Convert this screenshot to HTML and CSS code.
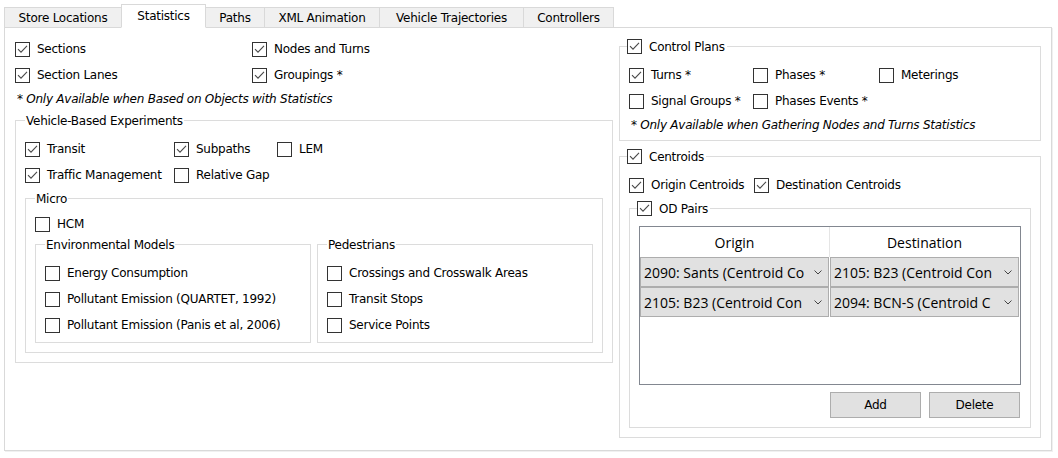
FILE: index.html
```html
<!DOCTYPE html>
<html>
<head>
<meta charset="utf-8">
<link rel="stylesheet" href="styles.css">
</head>
<body>
<div class="window">
  <div class="tabs">
    <div class="tab w-store">Store Locations</div>
    <div class="tab tab-active w-stat">Statistics</div>
    <div class="tab w-paths">Paths</div>
    <div class="tab w-xml">XML Animation</div>
    <div class="tab w-veh">Vehicle Trajectories</div>
    <div class="tab w-ctrl">Controllers</div>
  </div>
  <div class="panel">
    <div class="col col-left">
      <div class="grid grid-top">
        <label class="cb"><span class="box"><svg class="chk" viewBox="0 0 13 13"><path d="M2 6.2 L5 9.2 L11 2.8"/></svg></span>Sections</label>
        <label class="cb"><span class="box"><svg class="chk" viewBox="0 0 13 13"><path d="M2 6.2 L5 9.2 L11 2.8"/></svg></span>Nodes and Turns</label>
        <label class="cb"><span class="box"><svg class="chk" viewBox="0 0 13 13"><path d="M2 6.2 L5 9.2 L11 2.8"/></svg></span>Section Lanes</label>
        <label class="cb"><span class="box"><svg class="chk" viewBox="0 0 13 13"><path d="M2 6.2 L5 9.2 L11 2.8"/></svg></span>Groupings *</label>
      </div>
      <div class="note">* Only Available when Based on Objects with Statistics</div>
      <fieldset class="group g-vehicle">
        <legend class="lg-text">Vehicle-Based Experiments</legend>
        <div class="grid grid-veh">
          <label class="cb"><span class="box"><svg class="chk" viewBox="0 0 13 13"><path d="M2 6.2 L5 9.2 L11 2.8"/></svg></span>Transit</label>
          <label class="cb"><span class="box"><svg class="chk" viewBox="0 0 13 13"><path d="M2 6.2 L5 9.2 L11 2.8"/></svg></span>Subpaths</label>
          <label class="cb"><span class="box"></span>LEM</label>
          <label class="cb"><span class="box"><svg class="chk" viewBox="0 0 13 13"><path d="M2 6.2 L5 9.2 L11 2.8"/></svg></span>Traffic Management</label>
          <label class="cb"><span class="box"></span>Relative Gap</label>
        </div>
        <fieldset class="group g-micro">
          <legend class="lg-text">Micro</legend>
          <div class="hcm-row">
            <label class="cb"><span class="box"></span>HCM</label>
          </div>
          <div class="sub-groups">
            <fieldset class="group g-sub">
              <legend class="lg-text">Environmental Models</legend>
              <div class="grid grid-list">
                <label class="cb"><span class="box"></span>Energy Consumption</label>
                <label class="cb"><span class="box"></span>Pollutant Emission (QUARTET, 1992)</label>
                <label class="cb"><span class="box"></span>Pollutant Emission (Panis et al, 2006)</label>
              </div>
            </fieldset>
            <fieldset class="group g-sub">
              <legend class="lg-text">Pedestrians</legend>
              <div class="grid grid-list">
                <label class="cb"><span class="box"></span>Crossings and Crosswalk Areas</label>
                <label class="cb"><span class="box"></span>Transit Stops</label>
                <label class="cb"><span class="box"></span>Service Points</label>
              </div>
            </fieldset>
          </div>
        </fieldset>
      </fieldset>
    </div>

    <div class="col col-right">
      <fieldset class="group g-right g-control">
        <legend class="lg-check"><label class="cb"><span class="box"><svg class="chk" viewBox="0 0 13 13"><path d="M2 6.2 L5 9.2 L11 2.8"/></svg></span>Control Plans</label></legend>
        <div class="grid grid-ctrl">
          <label class="cb"><span class="box"><svg class="chk" viewBox="0 0 13 13"><path d="M2 6.2 L5 9.2 L11 2.8"/></svg></span>Turns *</label>
          <label class="cb"><span class="box"></span>Phases *</label>
          <label class="cb"><span class="box"></span>Meterings</label>
          <label class="cb"><span class="box"></span>Signal Groups *</label>
          <label class="cb"><span class="box"></span>Phases Events *</label>
        </div>
        <div class="note note-right">* Only Available when Gathering Nodes and Turns Statistics</div>
      </fieldset>

      <fieldset class="group g-right g-centroids">
        <legend class="lg-check"><label class="cb"><span class="box"><svg class="chk" viewBox="0 0 13 13"><path d="M2 6.2 L5 9.2 L11 2.8"/></svg></span>Centroids</label></legend>
        <div class="grid grid-cent">
          <label class="cb"><span class="box"><svg class="chk" viewBox="0 0 13 13"><path d="M2 6.2 L5 9.2 L11 2.8"/></svg></span>Origin Centroids</label>
          <label class="cb"><span class="box"><svg class="chk" viewBox="0 0 13 13"><path d="M2 6.2 L5 9.2 L11 2.8"/></svg></span>Destination Centroids</label>
        </div>
        <fieldset class="group g-right g-od">
          <legend class="lg-check"><label class="cb"><span class="box"><svg class="chk" viewBox="0 0 13 13"><path d="M2 6.2 L5 9.2 L11 2.8"/></svg></span>OD Pairs</label></legend>
          <div class="table">
            <div class="trow thead">
              <div class="th">Origin</div>
              <div class="th th-2">Destination</div>
            </div>
            <div class="trow">
              <div class="td"><div class="combo"><span class="combo-text">2090: Sants (Centroid Co</span><svg class="chev" viewBox="0 0 8 5"><path d="M0.5 0.5 L4 4 L7.5 0.5"/></svg></div></div>
              <div class="td td-2"><div class="combo"><span class="combo-text">2105: B23 (Centroid Con</span><svg class="chev" viewBox="0 0 8 5"><path d="M0.5 0.5 L4 4 L7.5 0.5"/></svg></div></div>
            </div>
            <div class="trow">
              <div class="td"><div class="combo"><span class="combo-text">2105: B23 (Centroid Con</span><svg class="chev" viewBox="0 0 8 5"><path d="M0.5 0.5 L4 4 L7.5 0.5"/></svg></div></div>
              <div class="td td-2"><div class="combo"><span class="combo-text">2094: BCN-S (Centroid C</span><svg class="chev" viewBox="0 0 8 5"><path d="M0.5 0.5 L4 4 L7.5 0.5"/></svg></div></div>
            </div>
          </div>
          <div class="buttons">
            <button class="btn">Add</button>
            <button class="btn">Delete</button>
          </div>
        </fieldset>
      </fieldset>
    </div>
  </div>
</div>
</body>
</html>
```
FILE: styles.css
```css
* { box-sizing: border-box; }
html, body { margin: 0; padding: 0; background: #ffffff; }
body {
  width: 1058px;
  height: 458px;
  overflow: hidden;
  font-family: "DejaVu Sans", Verdana, sans-serif;
  font-size: 12px;
  letter-spacing: -0.25px;
  color: #000000;
}
.window { padding: 4px 0 0 4px; }

/* tabs */
.tabs {
  display: flex;
  align-items: flex-end;
  height: 23px;
  position: relative;
  z-index: 2;
}
.tab {
  height: 21px;
  margin-bottom: -1px;
  margin-left: -1px;
  border: 1px solid #d9d9d9;
  background: #f0f0f0;
  display: flex;
  align-items: center;
  justify-content: center;
  white-space: nowrap;
  padding-top: 1px;
}
.tab:first-child { margin-left: 0; }
.tab-active {
  height: 24px;
  background: #ffffff;
  border-bottom-color: #ffffff;
  position: relative;
  z-index: 1;
  padding-top: 0;
  padding-bottom: 1px;
}
.w-store { width: 118px; }
.w-stat { width: 85px; }
.w-paths { width: 60px; }
.w-xml { width: 116px; }
.w-veh { width: 145px; }
.w-ctrl { width: 91px; }

/* panel */
.panel {
  width: 1048px;
  height: 424px;
  border: 1px solid #d9d9d9;
  box-shadow: 1px 1px 0 #f0f0f0;
  background: #ffffff;
  display: grid;
  grid-template-columns: 598px 422px;
  column-gap: 6px;
  padding: 0 10px;
  align-items: start;
}
.col-left { padding-top: 8px; }
.col-right { padding-top: 9px; }

/* checkbox */
.cb {
  display: flex;
  align-items: center;
  gap: 7px;
  white-space: nowrap;
}
.box {
  width: 15px;
  height: 15px;
  flex: none;
  border: 1px solid #333333;
  background: #ffffff;
  display: flex;
}
.chk {
  width: 13px;
  height: 13px;
  fill: none;
  stroke: #4a4a4a;
  stroke-width: 1.1;
}

/* grids */
.grid { display: grid; grid-auto-rows: 26px; align-items: center; }
.grid-top { grid-template-columns: 237px auto; }
.grid-veh { grid-template-columns: 149px 103px auto; }
.grid-list { grid-template-columns: auto; }
.grid-ctrl { grid-template-columns: 124px 126px auto; }
.grid-cent { grid-template-columns: 125px auto; }

.note {
  font-style: italic;
  line-height: 22px;
  padding-left: 2px;
}

/* group boxes */
.group {
  margin: 0;
  min-width: 0;
  border: 1px solid #dcdcdc;
  padding: 0 9px 9px 9px;
}
.lg-text {
  padding: 1px 1px 0 1px;
  height: 17px;
  line-height: 16px;
}
.lg-check {
  padding: 0 2px 0 0;
  height: 19px;
  margin-left: -2px;
  display: flex;
  align-items: center;
}
.lg-check .cb { height: 19px; }

.g-vehicle { margin-top: 2px; padding-top: 7px; }
.g-micro { margin-top: 2px; padding-top: 5px; }
.hcm-row { height: 24px; display: flex; align-items: center; }
.sub-groups {
  display: grid;
  grid-template-columns: 276px 276px;
  column-gap: 6px;
}
.g-sub { padding-top: 7px; padding-bottom: 4px; }

.g-control { padding-top: 6px; padding-bottom: 4px; }
.g-centroids { margin-top: 6px; padding-top: 6px; }
.g-od { margin-top: 1px; padding-top: 8px; }

/* table */
.table {
  height: 159px;
  border: 1px solid #828790;
  background: #ffffff;
}
.trow {
  display: grid;
  grid-template-columns: 189px 190px;
  height: 30px;
}
.th {
  display: flex;
  align-items: center;
  justify-content: center;
  font-family: "Open Sans", "Noto Sans", sans-serif;
  font-size: 14px;
  letter-spacing: 0;
  color: #000000;
}
.th-2 { border-left: 1px solid #e5e5e5; }
.td-2 { padding-left: 1px; }
.combo {
  height: 30px;
  border: 1px solid #adadad;
  background: #e1e1e1;
  display: flex;
  align-items: center;
  padding-left: 3px;
}
.combo-text {
  width: 161px;
  flex: none;
  overflow: hidden;
  white-space: nowrap;
  font-family: "Open Sans", "Noto Sans", sans-serif;
  font-size: 14px;
  letter-spacing: 0;
  color: #000000;
}
.chev {
  width: 8px;
  height: 5px;
  margin-left: auto;
  margin-right: 6px;
  fill: none;
  stroke: #444444;
  stroke-width: 1;
}

/* buttons */
.buttons {
  display: flex;
  justify-content: flex-end;
  gap: 8px;
  margin-top: 7px;
  padding-right: 1px;
}
.btn {
  width: 91px;
  height: 26px;
  border: 1px solid #adadad;
  background: #e1e1e1;
  font-family: inherit;
  font-size: 12px;
  letter-spacing: -0.25px;
  color: #000000;
  padding: 0;
}
```
